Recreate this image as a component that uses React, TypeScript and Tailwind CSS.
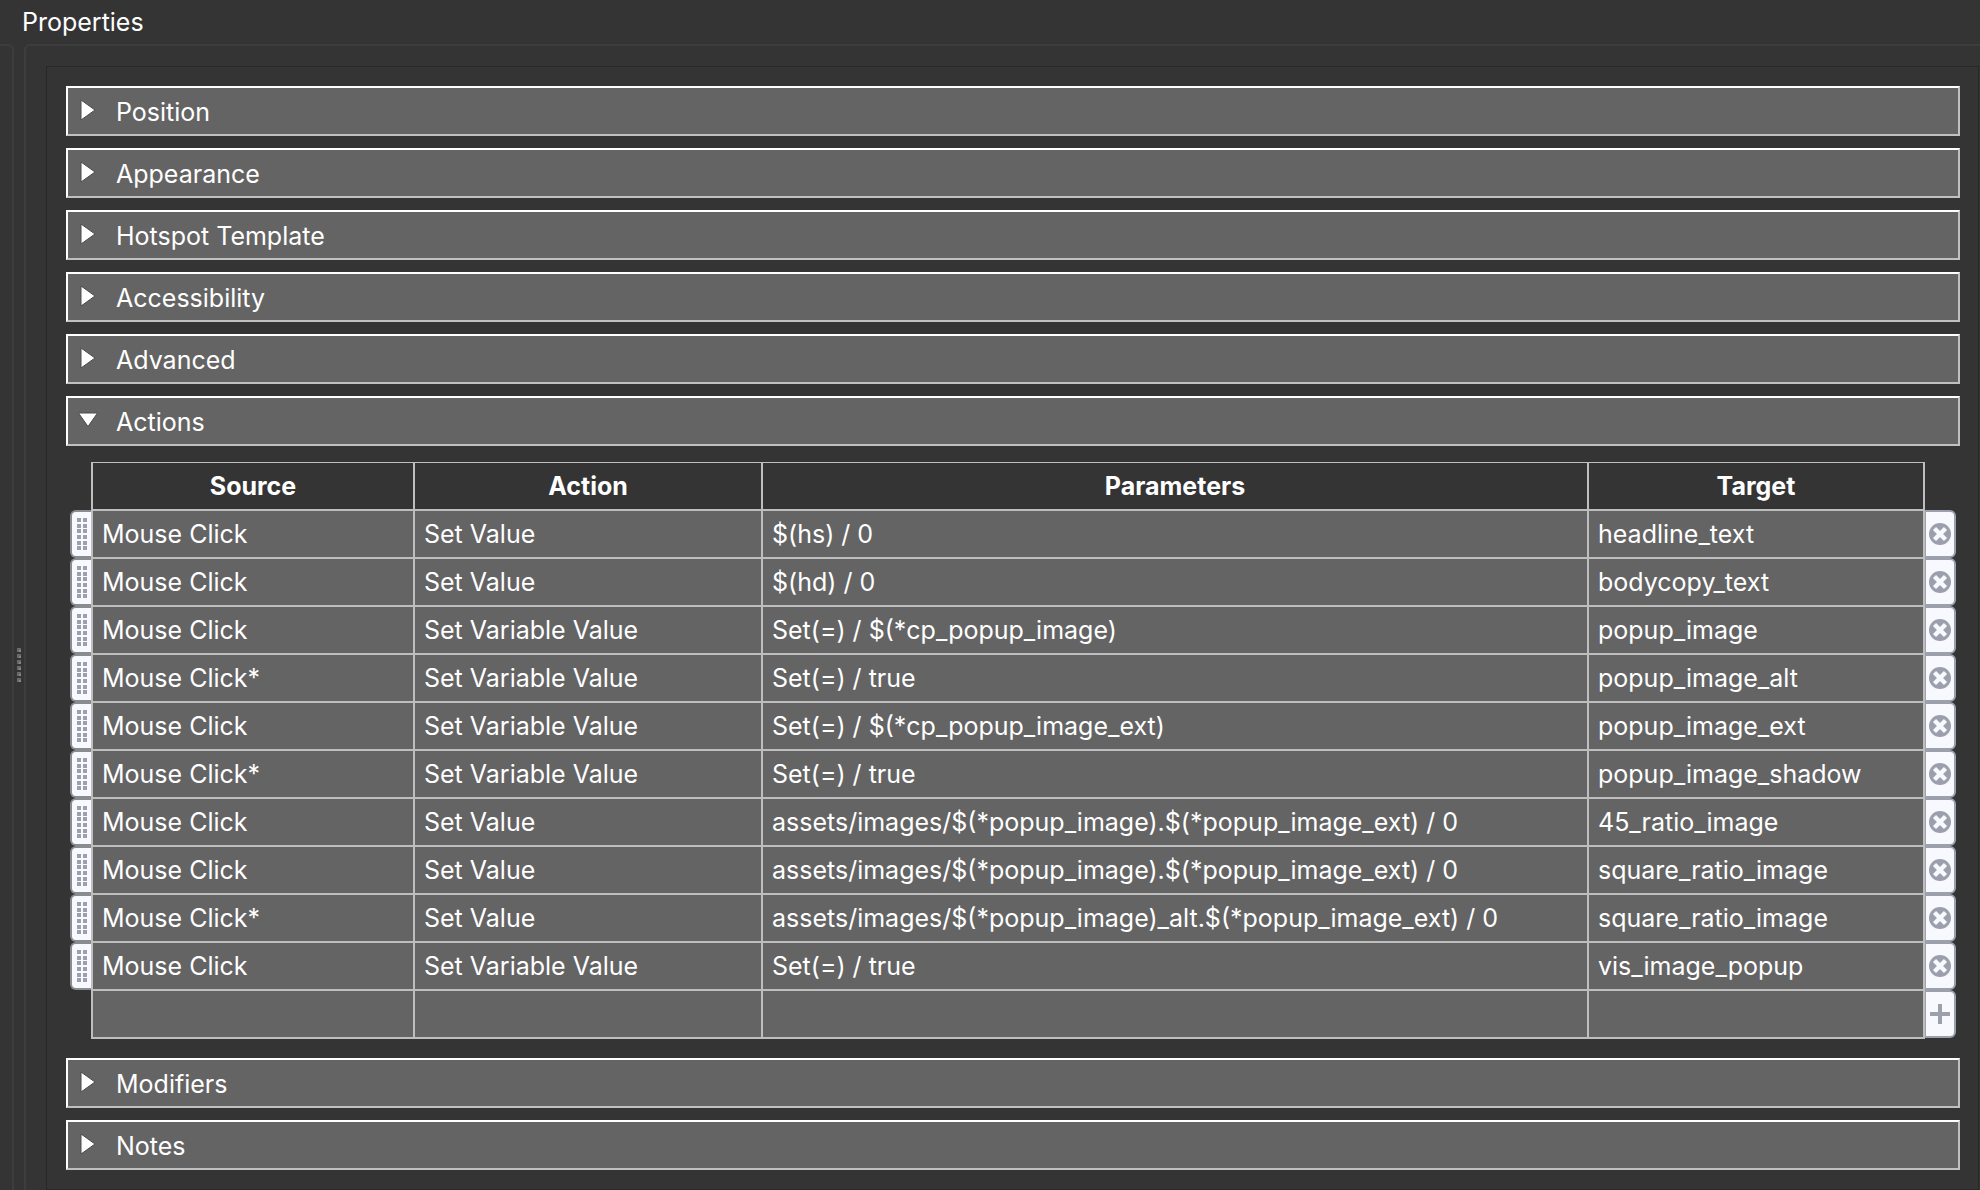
import { useState } from "react";

const rows = [
  ["Mouse Click", "Set Value", "$(hs) / 0", "headline_text"],
  ["Mouse Click", "Set Value", "$(hd) / 0", "bodycopy_text"],
  ["Mouse Click", "Set Variable Value", "Set(=) / $(*cp_popup_image)", "popup_image"],
  ["Mouse Click*", "Set Variable Value", "Set(=) / true", "popup_image_alt"],
  ["Mouse Click", "Set Variable Value", "Set(=) / $(*cp_popup_image_ext)", "popup_image_ext"],
  ["Mouse Click*", "Set Variable Value", "Set(=) / true", "popup_image_shadow"],
  ["Mouse Click", "Set Value", "assets/images/$(*popup_image).$(*popup_image_ext) / 0", "45_ratio_image"],
  ["Mouse Click", "Set Value", "assets/images/$(*popup_image).$(*popup_image_ext) / 0", "square_ratio_image"],
  ["Mouse Click*", "Set Value", "assets/images/$(*popup_image)_alt.$(*popup_image_ext) / 0", "square_ratio_image"],
  ["Mouse Click", "Set Variable Value", "Set(=) / true", "vis_image_popup"],
];

const headings = ["Source", "Action", "Parameters", "Target"];

const cell =
  "h-12 overflow-hidden border-2 border-[#bebebe] bg-[#646464] py-0 pr-1 pl-[9px] text-left whitespace-nowrap";

const sideButton =
  "flex h-12 w-full items-center justify-center rounded-r-md border-2 border-l border-[#9c9fac] bg-[#f8f9fe]";

function Triangle({ open }: { open: boolean }) {
  return (
    <svg className="h-6 w-6 shrink-0" viewBox="0 0 24 24" aria-hidden="true">
      {open ? (
        <path d="M2.5 5H21.5L12 18.5Z" fill="#fff" stroke="#4c4c4c" strokeWidth="1" />
      ) : (
        <path d="M5 2V22L19 12Z" fill="#fff" stroke="#4c4c4c" strokeWidth="1" />
      )}
    </svg>
  );
}

function SectionHeader({ title, open, onToggle }: { title: string; open: boolean; onToggle: () => void }) {
  return (
    <button
      type="button"
      aria-expanded={open}
      onClick={onToggle}
      className="flex h-[50px] w-full items-center gap-4 border-2 border-t-white border-r-[#c0c0c0] border-b-[#c0c0c0] border-l-white bg-[#646464] pt-0.5 pl-2 text-left"
    >
      <span className="pb-1">
        <Triangle open={open} />
      </span>
      <span>{title}</span>
    </button>
  );
}

function GripDots() {
  const ys = [0, 6, 11, 17, 23, 28];
  return (
    <svg className="h-8 w-[10px]" viewBox="0 0 10 32" fill="#9c9fac" shapeRendering="crispEdges" aria-hidden="true">
      {ys.map((y) => (
        <g key={y}>
          <rect x="0" y={y} width="4" height="4" />
          <rect x="6" y={y} width="4" height="4" />
        </g>
      ))}
    </svg>
  );
}

function ActionsTable() {
  return (
    <div className="px-1 pt-4 pb-[7px]">
      <table className="w-full table-fixed border-collapse">
        <colgroup>
          <col className="w-[22px]" />
          <col className="w-[322px]" />
          <col className="w-[348px]" />
          <col />
          <col className="w-[336px]" />
          <col className="w-8" />
        </colgroup>
        <thead>
          <tr className="h-[47px]">
            <td className="p-0" />
            {headings.map((h) => (
              <th key={h} scope="col" className="h-[47px] border-2 border-t border-[#bebebe] p-0 text-center font-bold">
                {h}
              </th>
            ))}
            <td className="p-0" />
          </tr>
        </thead>
        <tbody>
          {rows.map((row, i) => (
            <tr key={i} className="h-12">
              <td className="p-0">
                <button
                  type="button"
                  aria-label={`Move action ${i + 1}`}
                  className="flex h-12 w-full cursor-grab items-center justify-center rounded-l-md border-2 border-r-0 border-[#8b8c91] bg-[#f8f9fe]"
                >
                  <GripDots />
                </button>
              </td>
              {row.map((text, j) => (
                <td key={j} className={cell}>
                  {text}
                </td>
              ))}
              <td className="p-0">
                <button type="button" aria-label={`Delete action ${i + 1}`} className={sideButton}>
                  <svg className="h-[22px] w-[22px]" viewBox="0 0 22 22" aria-hidden="true">
                    <circle cx="11" cy="11" r="11" fill="#9c9fac" />
                    <path d="M5.5 5.5L16.5 16.5M16.5 5.5L5.5 16.5" stroke="#f8f9fe" strokeWidth="4.4" />
                  </svg>
                </button>
              </td>
            </tr>
          ))}
          <tr className="h-12">
            <td className="p-0" />
            {headings.map((h) => (
              <td key={h} className={cell} />
            ))}
            <td className="p-0">
              <button type="button" aria-label="Add action" className={sideButton}>
                <svg className="h-5 w-5" viewBox="0 0 20 20" aria-hidden="true">
                  <path d="M10 0V20M0 10H20" stroke="#9c9fac" strokeWidth="4" />
                </svg>
              </button>
            </td>
          </tr>
        </tbody>
      </table>
    </div>
  );
}

export default function App() {
  const [open, setOpen] = useState<Record<string, boolean>>({ Actions: true });
  const toggle = (name: string) => setOpen((o) => ({ ...o, [name]: !o[name] }));
  const sections = [
    "Position",
    "Appearance",
    "Hotspot Template",
    "Accessibility",
    "Advanced",
    "Actions",
    "Modifiers",
    "Notes",
  ];

  return (
    <div className="flex min-h-screen flex-col bg-[#343434] font-['Inter',sans-serif] text-[25px] leading-8 text-white">
      <h1 className="h-11 pt-[6px] pl-[22px] leading-8">Properties</h1>
      <div className="flex grow">
        <div className="w-[14px] shrink-0 rounded-tr-md border-t-2 border-r-2 border-[#3d3d3d]" />
        <div className="flex w-[10px] shrink-0 flex-col items-center justify-center gap-[2px] pt-24" role="separator" aria-orientation="vertical">
          {[0, 1, 2, 3, 4, 5].map((n) => (
            <span key={n} className="h-1 w-1 border-t-2 border-l-2 border-[#6a6a6a] bg-[#868686]" />
          ))}
        </div>
        <main className="flex min-w-0 grow flex-col rounded-tl-md border-t-2 border-l-2 border-[#3d3d3d] pt-5 pr-[1px] pl-5">
          <div className="grow border border-[#282828] pt-[19px] pr-[18px] pb-[18px] pl-[19px]">
            {sections.map((s) => (
              <section key={s} className="mb-3 last:mb-0">
                <SectionHeader title={s} open={!!open[s]} onToggle={() => toggle(s)} />
                {s === "Actions" && open[s] && <ActionsTable />}
              </section>
            ))}
          </div>
        </main>
      </div>
    </div>
  );
}
